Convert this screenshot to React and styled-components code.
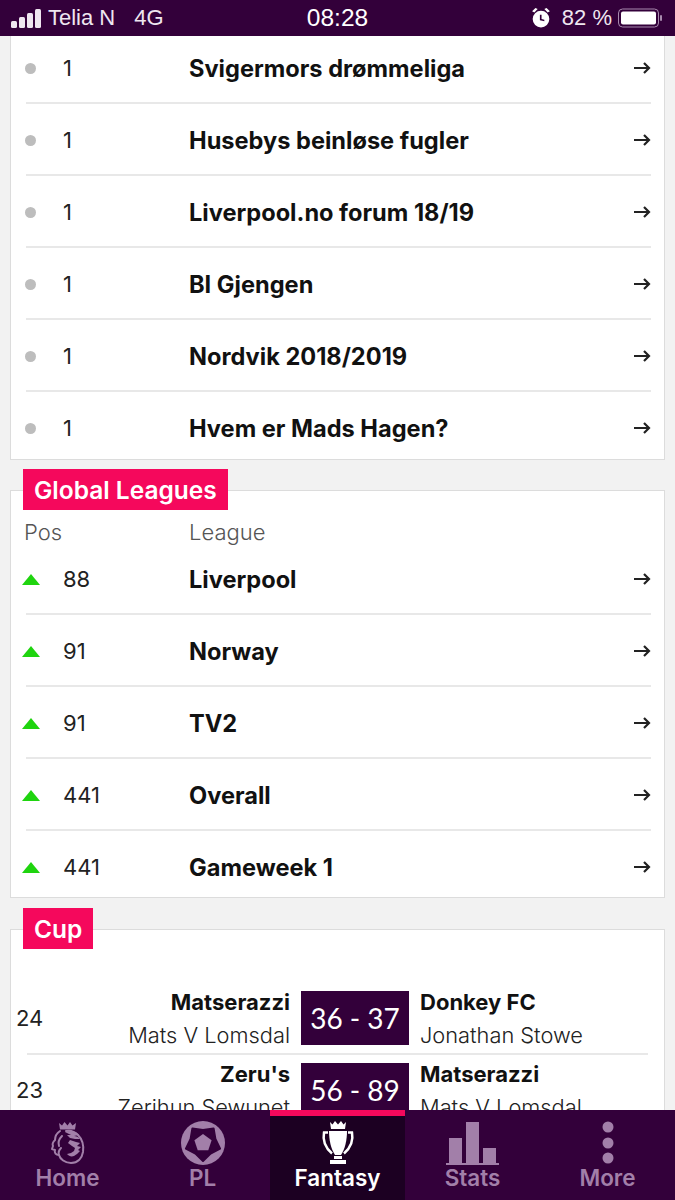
import React from "react";
import styled, { createGlobalStyle } from "styled-components";

const Global = createGlobalStyle`
  html, body { margin: 0; padding: 0; }
  body { background: #f2f2f2; font-family: "Inter", "Liberation Sans", sans-serif; color: #111; }
`;

const Screen = styled.div`
  width: 675px;
  height: 1200px;
  display: flex;
  flex-direction: column;
  overflow: hidden;
  background: #f2f2f2;
`;

const StatusBar = styled.header`
  position: relative;
  z-index: 2;
  height: 36px;
  flex: none;
  background: #33003a;
  color: #fff;
  display: grid;
  grid-template-columns: 1fr auto 1fr;
  align-items: center;
  padding: 0 11px 0 11px;
  font-family: "Liberation Sans", sans-serif;
  font-size: 22px;
`;

const StatusLeft = styled.div`
  display: flex;
  align-items: center;
  gap: 5px;
  color: #efe6f0;
`;

const StatusRight = styled.div`
  display: flex;
  align-items: center;
  justify-content: flex-end;
  gap: 6px;
  color: #efe6f0;
`;

const Clock = styled.div`
  font-size: 24.5px;
`;

const Network = styled.span`
  margin-left: 14px;
`;

const Content = styled.main`
  flex: 1;
  min-height: 0;
  overflow: hidden;
  padding: 0 10px;
`;

const Card = styled.section`
  position: relative;
  background: #fff;
  border: 1px solid #dcdcdc;
  border-top: ${(p) => (p.$clipped ? "none" : "1px solid #dcdcdc")};
  margin-top: ${(p) => p.$mt}px;
`;

const Tag = styled.h2`
  position: absolute;
  left: 12px;
  top: -22px;
  margin: 0;
  height: 41px;
  padding: 0 11px;
  display: flex;
  align-items: center;
  background: #f5085c;
  color: #fff;
  font-size: 24.5px;
  font-weight: 600;
`;

const HeadRow = styled.div`
  height: 52px;
  padding: 28px 0 0 13px;
  box-sizing: border-box;
  display: grid;
  grid-template-columns: 165px 1fr;
  align-items: center;
  font-size: 22px;
  font-weight: 300;
  color: #555;
`;

const Row = styled.div`
  height: 72px;
  box-sizing: border-box;
  margin: 0 13px ${(p) => -(p.$trim || 0)}px 15px;
  padding-top: 2px;
  display: grid;
  grid-template-columns: 14px 149px 1fr 18px;
  align-items: center;
  border-bottom: 2px solid ${(p) => (p.$trim ? "transparent" : "#e8e8e8")};
`;

const Dot = styled.i`
  display: block;
  width: 11px;
  height: 11px;
  margin-left: -1px;
  border-radius: 50%;
  background: #bdbdbd;
`;

const Rise = styled.i`
  display: block;
  width: 0;
  height: 0;
  margin-left: -4px;
  border-left: 9px solid transparent;
  border-right: 9px solid transparent;
  border-bottom: 11px solid #1fd40f;
`;

const Pos = styled.span`
  font-size: 22px;
  padding-left: 23px;
  color: #222;
`;

const Name = styled.span`
  font-size: 23.6px;
  font-weight: 700;
  color: #111;
`;

const Arrow = styled.svg`
  width: 18px;
  height: 16px;
  display: block;
`;

const CupBody = styled.div`
  padding-top: 52px;
`;

const Match = styled.div`
  height: 72px;
  box-sizing: border-box;
  padding: 0 16px 0 5px;
  display: grid;
  grid-template-columns: 38px 247px 108px 1fr;
  align-items: center;
`;

const Round = styled.span`
  font-size: 22px;
  color: #222;
`;

const Side = styled.div`
  display: flex;
  flex-direction: column;
  gap: 7px;
  align-items: ${(p) => (p.$end ? "flex-end" : "flex-start")};
  padding: ${(p) => (p.$end ? "0 11px 0 0" : "0 0 0 11px")};
  white-space: nowrap;
`;

const Team = styled.span`
  font-size: 22px;
  line-height: 26px;
  font-weight: 700;
`;

const Manager = styled.span`
  font-size: 21.8px;
  line-height: 26px;
  font-weight: 300;
  color: #222;
`;

const Score = styled.div`
  height: 54px;
  background: #33003a;
  color: #fff;
  font-family: "Lato", "Liberation Sans", sans-serif;
  font-size: 28px;
  display: flex;
  align-items: center;
  justify-content: center;
`;

const Rule = styled.div`
  height: 2px;
  margin: -1px 16px;
  background: #e8e8e8;
`;

const TabBar = styled.nav`
  position: relative;
  z-index: 2;
  height: 90px;
  flex: none;
  background: #33003a;
  display: grid;
  grid-template-columns: repeat(5, 135px);
`;

const Tab = styled.div`
  display: flex;
  flex-direction: column;
  align-items: center;
  padding-top: ${(p) => (p.$active ? "5px" : "11px")};
  background: ${(p) => (p.$active ? "#1c0022" : "transparent")};
  border-top: ${(p) => (p.$active ? "6px solid #f5085c" : "none")};
  color: ${(p) => (p.$active ? "#fff" : "#a27fa9")};
`;

const TabIcon = styled.svg`
  width: ${(p) => p.$w || 46}px;
  height: 44px;
  display: block;
  fill: currentColor;
`;

const TabLabel = styled.span`
  font-size: 22.5px;
  font-weight: 600;
  line-height: 26px;
  margin-top: 0;
`;

const RightArrow = () => (
  <Arrow viewBox="0 0 18 16" fill="none" stroke="#222" strokeWidth="2.2">
    <path d="M1 8h15M11 3l5 5-5 5" />
  </Arrow>
);

const League = ({ mark, pos, name, trim }) => (
  <Row $trim={trim}>
    {mark === "up" ? <Rise /> : <Dot />}
    <Pos>{pos}</Pos>
    <Name>{name}</Name>
    <RightArrow />
  </Row>
);

const Fixture = ({ round, a, am, score, b, bm }) => (
  <Match>
    <Round>{round}</Round>
    <Side $end>
      <Team>{a}</Team>
      <Manager>{am}</Manager>
    </Side>
    <Score>{score}</Score>
    <Side>
      <Team>{b}</Team>
      <Manager>{bm}</Manager>
    </Side>
  </Match>
);

const privateLeagues = [
  "Svigermors drømmeliga",
  "Husebys beinløse fugler",
  "Liverpool.no forum 18/19",
  "BI Gjengen",
  "Nordvik 2018/2019",
  "Hvem er Mads Hagen?",
];

const globalLeagues = [
  ["88", "Liverpool"],
  ["91", "Norway"],
  ["91", "TV2"],
  ["441", "Overall"],
  ["441", "Gameweek 1"],
];

const Lion = () => (
  <TabIcon viewBox="0 0 46 44">
    <path d="M14 2l3 2.500L19.500 1l3 3.500L25 1l2.500 3.500L31 2l-1 6.500H15z" />
    <g fill="none" stroke="currentColor" strokeWidth="2" strokeLinejoin="round" strokeLinecap="round">
      <path d="M15 10c-3 2-5 5-5 9-2 2-3 4-2 6l-1 3 3 1c-1 3 1 5 4 5 1 4 6 8 12 8 7 0 11-5 12-11 1-7-1-13-5-17-3-3-8-5-12-4" />
      <path d="M17 15c-3 3-4 7-3 10M14 34c-1-3 0-5 2-7" />
    </g>
    <path d="M20 11c5-2 11-1 14 3l-5 1c2 0 5 1 6 3l-5 0-5-1-3-3h4c-2-1-4-2-6-3zM25 19l6 2 4 1-3 3 4 1-3 3 2 1-3 3-3 2c-3 1-5 0-7-2l4-1 3-2 1-3-3-2-4-3z" />
  </TabIcon>
);

const Ball = () => (
  <TabIcon viewBox="0 0 46 44">
    <circle cx="23" cy="22" r="22" />
    <path
      d="M23 9L33.600 7.400L35.400 18L40.100 27.600L30.600 32.500L23 40L15.400 32.500L5.900 27.600L10.600 18L12.400 7.400Z"
      fill="#33003a"
      stroke="#33003a"
      strokeWidth="2"
      strokeLinejoin="round"
    />
    <path d="M23 13L31.600 19.200L28.300 29.300H17.700L14.400 19.200Z" />
  </TabIcon>
);

const Trophy = () => (
  <TabIcon viewBox="0 0 46 44">
    <path d="M15 1l2.500 2.500L20 0l3 3.500L26 0l2.500 3.500L31 1l-1 7H16z" />
    <path d="M14 10h18c0 9-2 18-6 24h-6c-4-6-6-15-6-24z" />
    <path
      d="M13 11.500H9c-1.500 8 1 15 8 21M33 11.500h4c1.500 8-1 15-8 21"
      fill="none"
      stroke="currentColor"
      strokeWidth="2.500"
    />
    <path d="M19 35h8v3h-8zM15 39h16v4H15z" />
  </TabIcon>
);

const Bars = () => (
  <TabIcon viewBox="0 0 54 44" $w={54}>
    <path d="M3 17h13v25H3zM20 1h13v41H20zM37 27h13v15H37zM0 42h53v2H0z" />
  </TabIcon>
);

const Dots = () => (
  <TabIcon viewBox="0 0 46 44">
    <circle cx="23" cy="6" r="5.500" />
    <circle cx="23" cy="22" r="5.500" />
    <circle cx="23" cy="37" r="5.500" />
  </TabIcon>
);

export default function App() {
  return (
    <Screen>
      <Global />
      <StatusBar>
        <StatusLeft>
          <svg width="32" height="20" viewBox="0 0 32 20" fill="#efe6f0">
            <rect x="0" y="13" width="6" height="7" rx="1.500" />
            <rect x="8" y="9" width="6" height="11" rx="1.500" />
            <rect x="16" y="5" width="6" height="15" rx="1.500" />
            <rect x="24" y="1" width="6" height="19" rx="1.500" />
          </svg>
          <span>Telia N</span>
          <Network>4G</Network>
        </StatusLeft>
        <Clock>08:28</Clock>
        <StatusRight>
          <svg width="18" height="20" viewBox="0 0 16 18" fill="#fff" style={{ marginRight: 6 }}>
            <path d="M3 0L0 3l2 1 3-3zM13 0l3 3-2 1-3-3z" />
            <path fillRule="evenodd" d="M8 2.500a7.500 7.500 0 1 1 0 15 7.500 7.500 0 0 1 0-15zM7 6v5l4 1v-1.500L8.500 10V6z" />
          </svg>
          <span>82 %</span>
          <svg width="46" height="20" viewBox="0 0 46 20">
            <rect x="0.500" y="1" width="40" height="18" rx="4" fill="none" stroke="#a88aae" />
            <rect x="3" y="3.500" width="35" height="13" rx="2" fill="#fff" />
            <rect x="42" y="7" width="2" height="6" rx="1" fill="#a88aae" />
          </svg>
        </StatusRight>
      </StatusBar>

      <Content>
        <Card $clipped $mt={-4}>
          {privateLeagues.map((name, i) => (
            <League key={name} pos="1" name={name} trim={i === privateLeagues.length - 1 ? 5 : 0} />
          ))}
        </Card>

        <Card $mt={30}>
          <Tag>Global Leagues</Tag>
          <HeadRow>
            <span>Pos</span>
            <span>League</span>
          </HeadRow>
          {globalLeagues.map(([pos, name], i) => (
            <League key={name} mark="up" pos={pos} name={name} trim={i === globalLeagues.length - 1 ? 6 : 0} />
          ))}
        </Card>

        <Card $mt={31}>
          <Tag>Cup</Tag>
          <CupBody>
            <Fixture round="24" a="Matserazzi" am="Mats V Lomsdal" score="36 - 37" b="Donkey FC" bm="Jonathan Stowe" />
            <Rule />
            <Fixture round="23" a="Zeru's" am="Zerihun Sewunet" score="56 - 89" b="Matserazzi" bm="Mats V Lomsdal" />
          </CupBody>
        </Card>
      </Content>

      <TabBar>
        <Tab><Lion /><TabLabel>Home</TabLabel></Tab>
        <Tab><Ball /><TabLabel>PL</TabLabel></Tab>
        <Tab $active><Trophy /><TabLabel>Fantasy</TabLabel></Tab>
        <Tab><Bars /><TabLabel>Stats</TabLabel></Tab>
        <Tab><Dots /><TabLabel>More</TabLabel></Tab>
      </TabBar>
    </Screen>
  );
}
